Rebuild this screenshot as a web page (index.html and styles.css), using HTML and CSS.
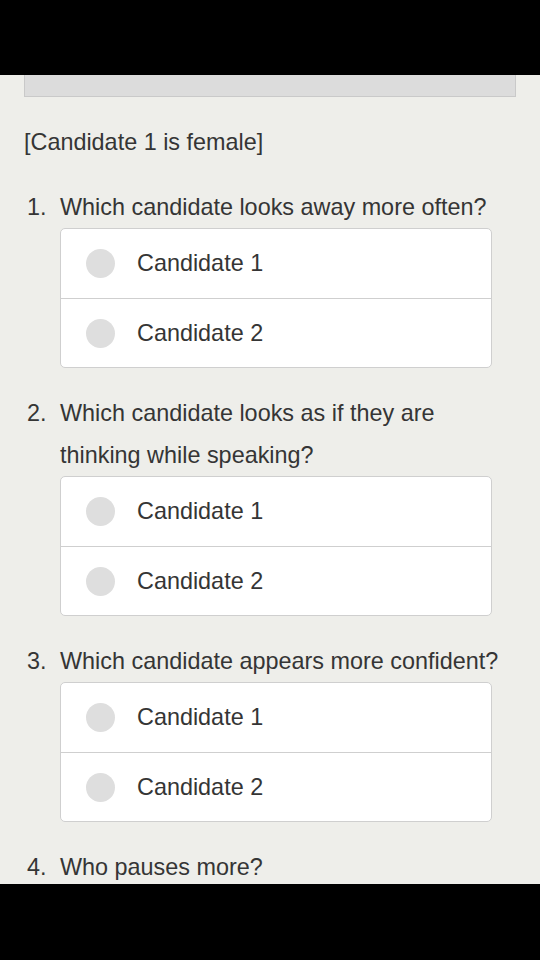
FILE: index.html
```html
<!DOCTYPE html>
<html>
<head>
<meta charset="utf-8">
<link rel="stylesheet" href="styles.css">
</head>
<body>
<div class="topbar"></div>
<div class="screen">
  <div class="header-box"></div>
  <p class="note">[Candidate 1 is female]</p>

  <div class="question">
    <span class="num">1.</span>
    <span class="qtext">Which candidate looks away more often?</span>
  </div>
  <div class="card">
    <div class="option"><span class="radio"></span><span class="label">Candidate 1</span></div>
    <div class="option"><span class="radio"></span><span class="label">Candidate 2</span></div>
  </div>

  <div class="question">
    <span class="num">2.</span>
    <span class="qtext">Which candidate looks as if they are thinking while speaking?</span>
  </div>
  <div class="card">
    <div class="option"><span class="radio"></span><span class="label">Candidate 1</span></div>
    <div class="option"><span class="radio"></span><span class="label">Candidate 2</span></div>
  </div>

  <div class="question">
    <span class="num">3.</span>
    <span class="qtext">Which candidate appears more confident?</span>
  </div>
  <div class="card">
    <div class="option"><span class="radio"></span><span class="label">Candidate 1</span></div>
    <div class="option"><span class="radio"></span><span class="label">Candidate 2</span></div>
  </div>

  <div class="question">
    <span class="num">4.</span>
    <span class="qtext">Who pauses more?</span>
  </div>
</div>
<div class="bottombar"></div>
</body>
</html>
```

FILE: styles.css
```css
* { box-sizing: border-box; }
html, body { margin: 0; padding: 0; height: 100%; }
body {
  display: flex;
  flex-direction: column;
  background: #000;
  font-family: "Liberation Sans", Arial, sans-serif;
  color: #353535;
}
.topbar { height: 75px; flex: none; background: #000; }
.bottombar { flex: 1; background: #000; }
.screen {
  height: 809px;
  flex: none;
  overflow: hidden;
  background: #eeeeea;
  padding: 0 24px;
  display: flex;
  flex-direction: column;
}
.header-box {
  height: 22px;
  flex: none;
  background: #dcdcdc;
  border: 1px solid #c9c9c9;
  border-top: none;
}
.note {
  margin: 24px 0 0;
  font-size: 23.4px;
  line-height: 42px;
}
.question {
  display: grid;
  grid-template-columns: 36px 1fr;
  margin-top: 23px;
  font-size: 23.4px;
  line-height: 42px;
  flex: none;
}
.card + .question { margin-top: 24px; }
.num { padding-left: 3px; }
.card {
  margin: 0 24px 0 36px;
  background: #fff;
  border: 1px solid #cfcfcf;
  border-radius: 5px;
  flex: none;
}
.option {
  height: 69px;
  display: flex;
  align-items: center;
  padding-left: 25px;
  gap: 22px;
  font-size: 23.4px;
}
.option + .option { border-top: 1px solid #cfcfcf; }
.radio {
  width: 29px;
  height: 29px;
  border-radius: 50%;
  background: #dedede;
  flex: none;
}
.label { color: #353535; }
```
